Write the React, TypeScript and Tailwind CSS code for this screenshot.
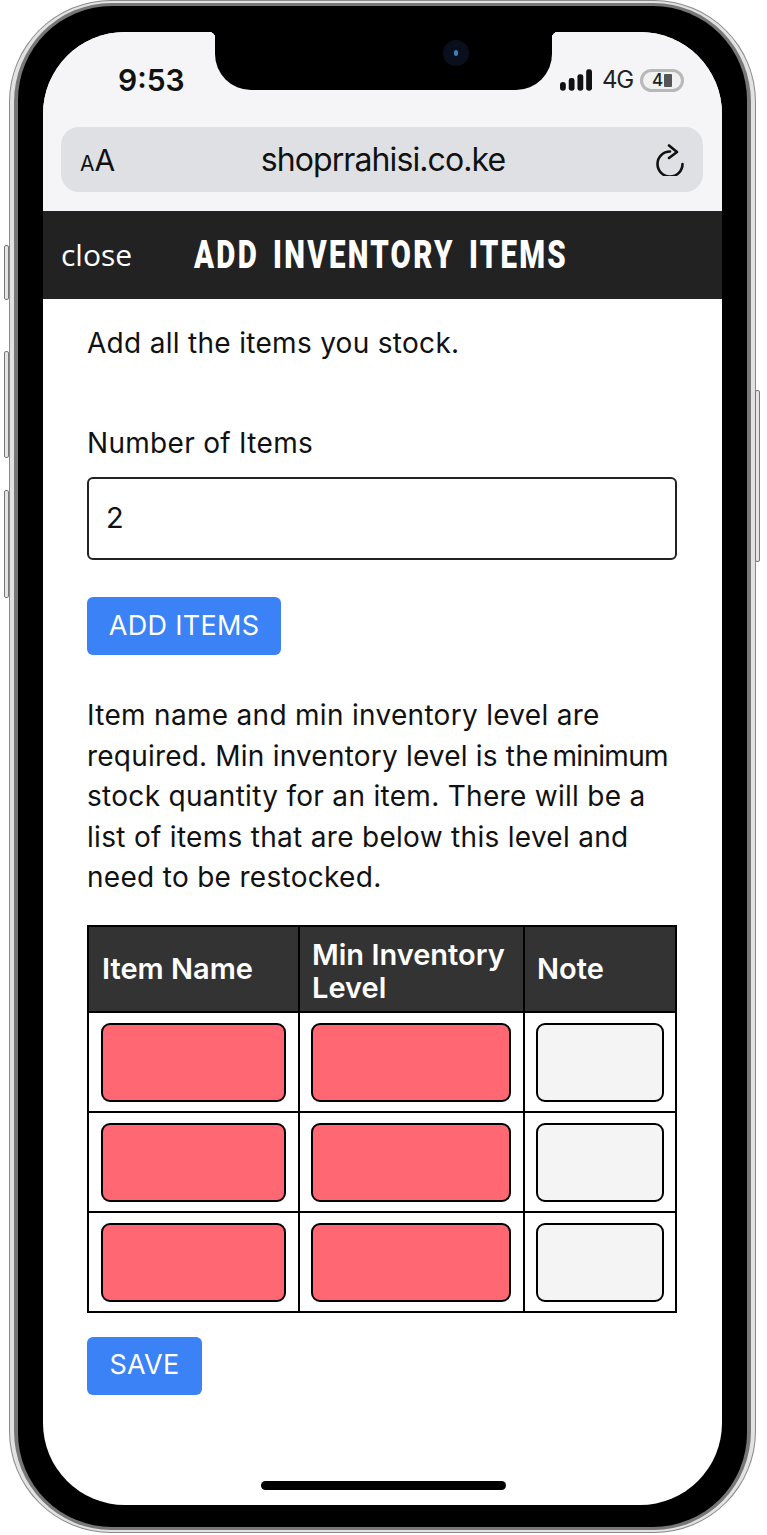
const rows = [0, 1, 2]

function SideButton({ className }: { className: string }) {
  return <div className={`absolute w-[5px] rounded-[2px] border border-[#777] bg-[#e4e4e4] ${className}`} />
}

function StatusIcons() {
  return (
    <div className="flex items-center">
      <svg width="32" height="22" viewBox="0 0 33 22" fill="#111">
        <rect x="0" y="13" width="6" height="9" rx="3" />
        <rect x="9" y="9" width="6" height="13" rx="2.5" />
        <rect x="18" y="5" width="6" height="17" rx="2.5" />
        <rect x="27" y="0" width="6" height="22" rx="2.5" />
      </svg>
      <span className="ml-[10px] text-[24px] leading-none text-[#222] font-['Inter',sans-serif] tracking-[-1.2px]">4G</span>
      <div className="ml-[7px] flex h-[23px] w-[44px] items-center justify-center rounded-full border-[3px] border-[#b8b8b8] bg-[#f1f1f1]">
        <span className="text-[17px] leading-none font-medium text-[#222] font-['Inter',sans-serif]">4</span>
        <div className="ml-[1px] h-[13px] w-[8px] rounded-[1px] bg-[#555]" />
      </div>
    </div>
  )
}

export default function App() {
  return (
    <div className="relative h-[1535px] w-[767px] overflow-hidden bg-white font-['Inter',sans-serif]">
      <SideButton className="left-[4px] top-[245px] h-[55px]" />
      <SideButton className="left-[4px] top-[351px] h-[107px]" />
      <SideButton className="left-[4px] top-[490px] h-[108px]" />
      <SideButton className="left-[755px] top-[390px] h-[172px]" />

      {/* phone body */}
      <div className="ml-[9px] h-[1533px] w-[747px] rounded-[102px] bg-[#8a8a8a] p-[1px]">
        <div className="h-full w-full rounded-[101px] border-x-[4px] border-y-[2px] border-[#e2e2e2] bg-[#777]">
          <div className="h-full w-full rounded-[98px] pt-[3px] pb-[3px] px-[4px]">
            <div className="h-full w-full rounded-[94px] bg-black px-[25px] pt-[26px] pb-[22px]">
              {/* screen */}
              <div className="relative flex h-full w-full flex-col overflow-hidden rounded-[82px] bg-white">
                <div className="absolute left-[172px] top-0 h-[58px] w-[337px] rounded-b-[36px] bg-black">
                  <div className="absolute left-[-6px] top-0 h-[6px] w-[6px] bg-[radial-gradient(circle_at_0_100%,transparent_6px,black_6.5px)]" />
                  <div className="absolute right-[-6px] top-0 h-[6px] w-[6px] bg-[radial-gradient(circle_at_100%_100%,transparent_6px,black_6.5px)]" />
                  <div className="absolute left-[228px] top-[8px] h-[26px] w-[26px] rounded-full bg-[#0a0f1e]">
                    <div className="absolute left-[11px] top-[10px] h-[6px] w-[4px] rounded-full bg-[#3f7fb5]" />
                  </div>
                </div>

                <div className="bg-[#f5f5f7] pl-[18px] pr-[19px] pt-[34px] pb-[19px]">
                  <div className="flex h-[28px] items-center justify-between pl-[57px] pr-[19px]">
                    <span className="text-[30px] leading-none font-semibold text-[#111]">9:53</span>
                    <StatusIcons />
                  </div>
                  <div className="mt-[33px] flex h-[65px] items-center justify-between rounded-[18px] bg-[#dfe0e4] pl-[19px] pr-[17px] text-[#111]">
                    <span className="flex w-[37px] items-baseline">
                      <span className="text-[21px] leading-none">A</span>
                      <span className="text-[30px] leading-none">A</span>
                    </span>
                    <span className="text-[32px] leading-none tracking-[-0.9px]">shoprrahisi.co.ke</span>
                    <span className="flex w-[37px] justify-end">
                      <svg width="30" height="32" viewBox="0 0 30 32" fill="none" stroke="#111" strokeWidth="2.6" strokeLinecap="round" strokeLinejoin="round">
                        <path d="M14 7.5A12.5 12.5 0 1 0 26.5 20" />
                        <path d="M13 1.5l8 6.5-8 6" />
                      </svg>
                    </span>
                  </div>
                </div>

                <div className="flex h-[88px] items-center bg-[#222]">
                  <span className="ml-[18px] w-[133px] text-[30px] leading-none text-white font-['Open_Sans',sans-serif]">close</span>
                  <span className="origin-left scale-x-[0.755] whitespace-nowrap text-[39px] leading-none font-black tracking-[3px] text-white [word-spacing:6px] font-['Roboto',sans-serif]">ADD INVENTORY ITEMS</span>
                </div>

                <div className="flex-1 pl-[44px] pr-[45px] text-[28px] leading-[40.5px] tracking-[0.3px] text-[#111]">
                  <p className="mt-[24px]">Add all the items you stock.</p>
                  <p className="mt-[59px]">Number of Items</p>
                  <div className="mt-[14px] flex h-[83px] items-center rounded-[6px] border-2 border-[#222] pl-[17px] text-[29px]">2</div>
                  <button className="mt-[37px] block h-[58px] w-[194px] rounded-[6px] bg-[#3b82f6] text-[27px] text-white">ADD ITEMS</button>
                  <p className="mt-[40px] whitespace-nowrap">
                    Item name and min inventory level are<br />
                    <span className="tracking-[0.2px]">required. Min inventory level is the</span><span className="ml-[4px] tracking-[-0.7px]">minimum</span><br />
                    stock quantity for an item. There will be a<br />
                    list of items that are below this level and<br />
                    need to be restocked.
                  </p>
                  <table className="mt-[27px] w-[590px] table-fixed border-collapse border-2 border-black tracking-normal">
                    <thead>
                      <tr className="h-[86px] bg-[#333] text-left text-[29px] leading-[33px] font-semibold text-white">
                        <th className="w-[211px] border-r-2 border-black pl-[13px] font-semibold">Item Name</th>
                        <th className="w-[225px] border-r-2 border-black pl-[12px] pt-[4px] font-semibold">Min Inventory Level</th>
                        <th className="pl-[12px] font-semibold">Note</th>
                      </tr>
                    </thead>
                    <tbody>
                      {rows.map((row) => (
                        <tr key={row}>
                          <td className="h-[100px] border-t-2 border-r-2 border-black px-[12px] pt-[2px]">
                            <div className="h-[79px] rounded-[9px] border-2 border-black bg-[#ff6872]" />
                          </td>
                          <td className="h-[100px] border-t-2 border-r-2 border-black pl-[11px] pr-[12px] pt-[2px]">
                            <div className="h-[79px] rounded-[9px] border-2 border-black bg-[#ff6872]" />
                          </td>
                          <td className="h-[100px] border-t-2 border-black px-[11px] pt-[2px]">
                            <div className="h-[79px] rounded-[9px] border-2 border-black bg-[#f4f4f4]" />
                          </td>
                        </tr>
                      ))}
                    </tbody>
                  </table>
                  <button className="mt-[24px] block h-[58px] w-[115px] rounded-[6px] bg-[#3b82f6] text-[27px] text-white">SAVE</button>
                </div>

                <div className="absolute bottom-[15px] left-[218px] h-[9px] w-[245px] rounded-full bg-black" />
              </div>
            </div>
          </div>
        </div>
      </div>
    </div>
  )
}
